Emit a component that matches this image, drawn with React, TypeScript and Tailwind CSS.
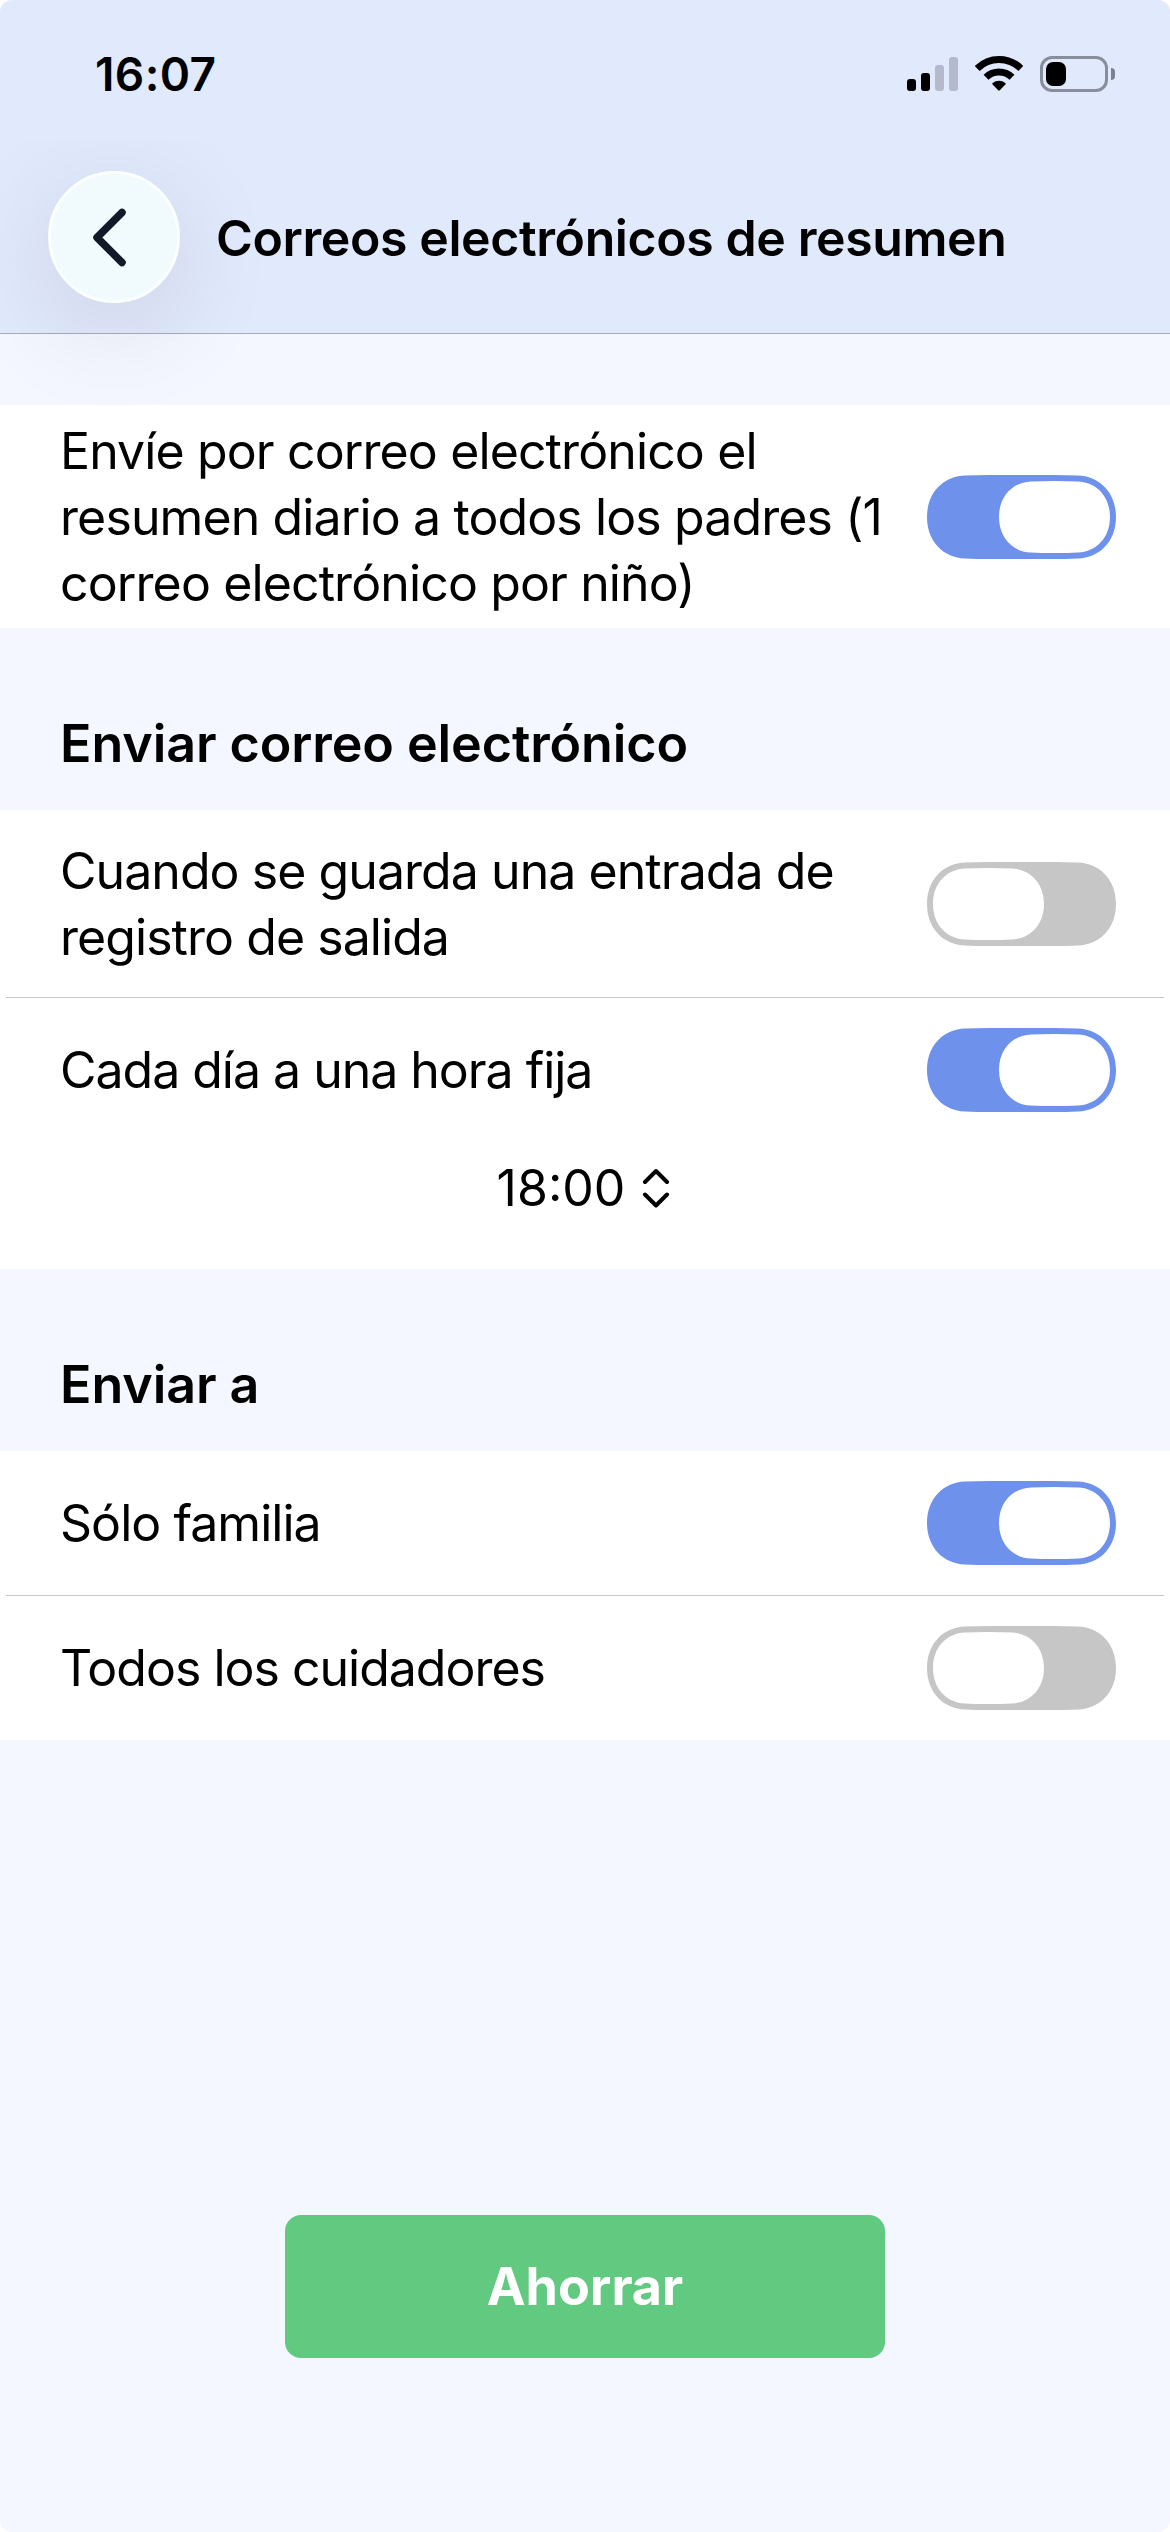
import { useState, type ReactNode } from "react";

type ToggleProps = {
  label: string;
  checked: boolean;
  onChange: (checked: boolean) => void;
};

function Toggle({ label, checked, onChange }: ToggleProps) {
  return (
    <button
      type="button"
      role="switch"
      aria-checked={checked}
      aria-label={label}
      onClick={() => onChange(!checked)}
      className="shrink-0"
    >
      {/* continuous corners, a bit flatter than a plain pill */}
      <svg
        className="h-[84px] w-[189px]"
        viewBox="0 0 189 84"
        aria-hidden="true"
      >
        <path
          className={checked ? "fill-[#6e91ec]" : "fill-[#c6c6c6]"}
          d="M0 42C0 17 17 1.2 38 .5Q50 0 62 0H127Q139 0 151 .5C172 1.2 189 17 189 42S172 82.8 151 83.5Q139 84 127 84H62Q50 84 38 83.5C17 82.8 0 67 0 42z"
        />
        <path
          className="fill-white"
          transform={checked ? "translate(72 6)" : "translate(6 6)"}
          d="M0 36C0 15 14 1.2 32 .5Q43 0 55.500 0T79 .5C97 1.200 111 15 111 36S97 70.800 79 71.500Q68 72 55.500 72T32 71.500C14 70.800 0 57 0 36z"
        />
      </svg>
    </button>
  );
}

type SettingRowProps = ToggleProps & {
  className: string;
  children: ReactNode;
};

function SettingRow({ className, children, ...toggle }: SettingRowProps) {
  return (
    <div
      className={`flex items-center justify-between pr-[54px] pl-[60px] ${className}`}
    >
      <p className="text-[50px] leading-[66px] whitespace-nowrap">{children}</p>
      <Toggle {...toggle} />
    </div>
  );
}

function SectionTitle({ children }: { children: ReactNode }) {
  return (
    <h2 className="pt-[83px] pb-[33px] pl-[60px] text-[52px] leading-[66px] font-semibold tracking-[-0.1px]">
      {children}
    </h2>
  );
}

function Divider() {
  return <div className="mx-1.5 h-px bg-[#c6c6c6]" />;
}

function StatusBar() {
  return (
    <div className="flex h-[141px] items-start justify-between pt-[46px] pr-[55px] pl-[95px]">
      <p className="text-[46px] leading-[56px] font-semibold tracking-[0.4px]">
        16:07
      </p>
      <div className="flex items-end pt-[9px]">
        <div className="mb-px flex items-end gap-[5px]">
          <span className="h-3 w-[9px] rounded-[3px] bg-black" />
          <span className="h-[18px] w-[9px] rounded-[3px] bg-black" />
          <span className="h-[26px] w-[9px] rounded-[3px] bg-[#b4bacb]" />
          <span className="h-[34px] w-[9px] rounded-[3px] bg-[#b4bacb]" />
        </div>
        <svg
          className="mb-px ml-[17px] h-9 w-12"
          viewBox="0 0 48 36"
          fill="none"
          aria-hidden="true"
        >
          <path d="M2.2 13.4a31 31 0 0 1 43.6 0" stroke="#000" strokeWidth="7" />
          <path d="M11 22.3a18.6 18.6 0 0 1 26 0" stroke="#000" strokeWidth="7" />
          <path
            d="M17.6 29.6q-.8-.8.1-1.5a9.6 9.6 0 0 1 12.6 0q.9.7.1 1.5l-5.6 5.7q-.8.8-1.6 0z"
            fill="#000"
          />
        </svg>
        <div className="ml-[17px] flex items-center gap-[3px]">
          <div className="h-9 w-[68px] rounded-[12px] border-[3px] border-[#898e9b] p-[3px]">
            <div className="h-6 w-5 rounded-[7px] bg-black" />
          </div>
          <span className="h-3 w-1 rounded-r-full bg-[#7c818d]" />
        </div>
      </div>
    </div>
  );
}

function Header() {
  return (
    <header className="relative z-10 h-[334px] border-b border-[#a5acba] bg-[#e1e9fd]">
      <StatusBar />
      {/* the button glow spills over the list but stops at the status bar */}
      <div className="flex h-[192px] items-center pl-12 [clip-path:inset(0_0_-200px_0)]">
        <button
          type="button"
          aria-label="Atrás"
          className="flex size-[132px] items-center justify-center rounded-full border-[3px] border-[#fcffff] bg-[#f1fafd] shadow-[0_24px_110px_rgba(40,15,0,0.11)]"
        >
          <svg
            className="mr-2.5 size-[60px]"
            viewBox="0 0 60 60"
            fill="none"
            stroke="#121a2a"
            strokeWidth="7.5"
            strokeLinecap="round"
            strokeLinejoin="round"
            aria-hidden="true"
          >
            <path d="M43 5.500 18 30.500l25 25" />
          </svg>
        </button>
        <h1 className="pt-0.5 pl-9 text-[50px] leading-[66px] font-semibold tracking-[-0.4px]">
          Correos electrónicos de resumen
        </h1>
      </div>
    </header>
  );
}

export default function App() {
  const [daily, setDaily] = useState(true);
  const [onCheckout, setOnCheckout] = useState(false);
  const [fixedTime, setFixedTime] = useState(true);
  const [familyOnly, setFamilyOnly] = useState(true);
  const [allCarers, setAllCarers] = useState(false);

  return (
    <div className="bg-white">
      <div className="flex h-[2532px] w-[1170px] flex-col overflow-hidden rounded-[12px] bg-[#f4f7ff] font-['Inter',sans-serif] text-black">
        <Header />

        <main className="pt-[71px]">
          <section className="bg-white">
            <SettingRow
              className="h-[223px] tracking-[-0.88px]"
              label="Resumen diario"
              checked={daily}
              onChange={setDaily}
            >
              Envíe por correo electrónico el
              <br />
              resumen diario a todos los padres (1
              <br />
              correo electrónico por niño)
            </SettingRow>
          </section>

          <SectionTitle>Enviar correo electrónico</SectionTitle>
          <section className="bg-white">
            <SettingRow
              className="h-[187px] tracking-[-0.94px]"
              label="Registro de salida"
              checked={onCheckout}
              onChange={setOnCheckout}
            >
              Cuando se guarda una entrada de
              <br />
              registro de salida
            </SettingRow>
            <Divider />
            <SettingRow
              className="h-[144px] tracking-[-1.02px]"
              label="Hora fija"
              checked={fixedTime}
              onChange={setFixedTime}
            >
              Cada día a una hora fija
            </SettingRow>
            <div className="flex h-[127px] items-start justify-center pt-[13px] pr-[3px]">
              <button type="button" className="flex items-center">
                <span className="text-[50px] leading-[66px]">18:00</span>
                <svg
                  className="ml-[17px] h-10 w-7"
                  viewBox="0 0 28 40"
                  fill="none"
                  stroke="#000"
                  strokeWidth="4"
                  strokeLinecap="round"
                  strokeLinejoin="round"
                  aria-hidden="true"
                >
                  <path d="M3 14 14 3l11 11M3 26.500l11 11 11-11" />
                </svg>
              </button>
            </div>
          </section>

          <SectionTitle>Enviar a</SectionTitle>
          <section className="bg-white">
            <SettingRow
              className="h-[144px] tracking-[-0.96px]"
              label="Familia"
              checked={familyOnly}
              onChange={setFamilyOnly}
            >
              Sólo familia
            </SettingRow>
            <Divider />
            <SettingRow
              className="h-[144px] tracking-[-1px]"
              label="Cuidadores"
              checked={allCarers}
              onChange={setAllCarers}
            >
              Todos los cuidadores
            </SettingRow>
          </section>
        </main>

        <footer className="mt-auto flex justify-center pb-[174px]">
          <button
            type="button"
            className="h-[143px] w-[600px] rounded-[16px] bg-[#62ca80] text-[52px] leading-[66px] font-bold text-white"
          >
            Ahorrar
          </button>
        </footer>
      </div>
    </div>
  );
}
